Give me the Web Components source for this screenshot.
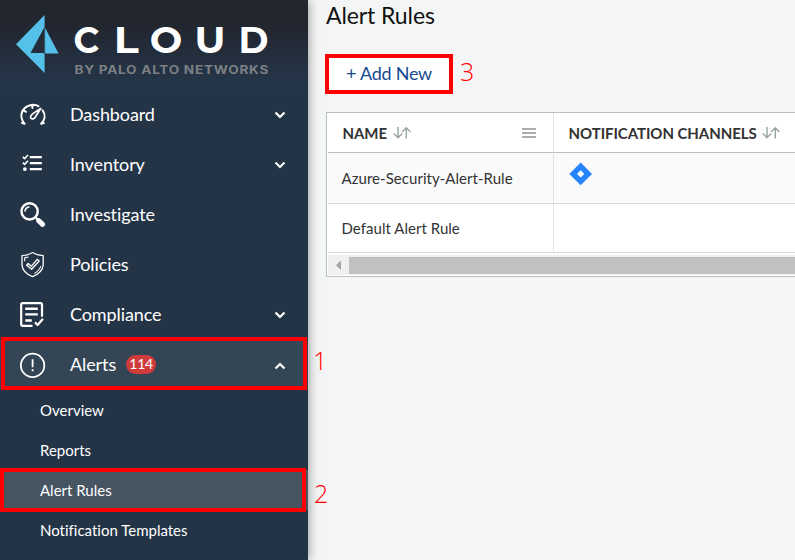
<!DOCTYPE html>
<html lang="en">
<head>
<meta charset="utf-8">
<title>Alert Rules</title>
<style>
html,body{margin:0;height:560px;overflow:hidden}
body{font-family:Lato,"Liberation Sans",sans-serif;font-variant-ligatures:none;background:#f4f6f5}
</style>
</head>
<body>
<cloud-app></cloud-app>
<script>
const define = (name, html) => customElements.define(name, class extends HTMLElement {
  constructor() {
    super();
    const t = document.createElement('template');
    t.innerHTML = html;
    this.attachShadow({ mode: 'open' }).append(t.content.cloneNode(true));
  }
});

define('red-mark', `<style>
:host{position:absolute;box-sizing:border-box;border:4px solid #f00;z-index:3;pointer-events:none}
span{position:absolute;left:calc(100% + var(--gap,10px));top:var(--drop,0px);font:300 25px/30px "Open Sans","Noto Sans",sans-serif;letter-spacing:0;color:#f00}
</style><span><slot></slot></span>`);

define('brand-logo', `<style>:host{display:block;height:90px;background:linear-gradient(#22262f 0,#22262f 25px,#243548 80px)}svg{display:block}</style>
<svg width="308" height="90" viewBox="0 0 308 90">
<path fill="#55c0e8" fill-rule="evenodd" d="M44.6 15 16 44.3 44.6 73V53.6H58.6L44.6 27ZM44 28V53H30.5Z"/>
<path stroke="#232b37" stroke-width=".8" d="M44.6 27V54"/>
<g font-family="Montserrat,Inter,sans-serif" fill="#fff" font-weight="700" font-size="35.5">
<text x="73.5" y="53.3">C</text><text x="113.7" y="53.3" textLength="25" lengthAdjust="spacingAndGlyphs">L</text><text x="149.7" y="53.3" textLength="32.5" lengthAdjust="spacingAndGlyphs">O</text><text x="194.5" y="53.3" textLength="31" lengthAdjust="spacingAndGlyphs">U</text><text x="238.5" y="53.3" textLength="30" lengthAdjust="spacingAndGlyphs">D</text></g>
<g font-family="Inter,sans-serif" font-weight="700" font-size="11.3" fill="#7d7f83" transform="translate(74.5 73.5) scale(1.2 1)">
<text textLength="161.5">BY PALO ALTO NETWORKS</text></g>
</svg>`);

const icons = {
  gauge: '<g fill="none" stroke="#fff" stroke-width="2" stroke-linecap="round" stroke-linejoin="round"><path d="M1.9 20.9 4.6 21.7M4.6 21.7C-1.6 14.5 1.6 5.5 10.2 3.2 13.3 2.4 16.3 2.9 18.4 4.2M22.6 8.4C26 12.8 24.9 18 21.1 21.7L23.8 21.1M12.4 3.2V6M4 8.6 6 9.8"/><path stroke-width="1.7" d="M20.7 6.5 13.3 11.4C10.8 13.2 9.6 15.6 11.3 16.6 13.1 17.6 14.9 16 15.8 14.3Z"/></g>',
  list: '<path fill="none" stroke="#fff" stroke-width="2.2" d="M9.8 5.2H21.8M9.8 11.2H21.8M9.8 17.2H21.8"/><path fill="none" stroke="#fff" stroke-width="1.6" d="M2.8 4.9 4.6 6.6 8 3M2.8 10.7 4.6 12.4 8 8.8"/><circle cx="4.9" cy="17.1" r="1.9" fill="#fff"/>',
  search: '<circle cx="9.6" cy="9.4" r="8.1" fill="none" stroke="#fff" stroke-width="2.4"/><path fill="none" stroke="#fff" stroke-width="1.6" stroke-linecap="round" d="M5 9Q5.4 5.6 8.8 5"/><path stroke="#fff" stroke-width="2" d="M15.2 15 18 17.8"/><path stroke="#fff" stroke-width="5" stroke-linecap="round" d="M18.6 18.6 22.6 22.4"/>',
  shield: '<path fill="none" stroke="#fff" stroke-width="1.3" stroke-linejoin="round" d="M12.5.5C9.5 2.6 6.3 3.3 2 3.6V13C2.3 18.8 7.5 22.6 12.5 24.7 17.5 22.6 22.8 18.8 23.2 13V3.6C19 3.3 15.5 2.6 12.5.5Z"/><path fill="none" stroke="#fff" stroke-width="1.1" d="M4.7 9.2V5.8L8.5 5M20.7 14C20 17.5 17 20 14.5 21.5"/><path fill="none" stroke="#fff" stroke-width="1.3" stroke-linejoin="round" d="M6.6 13.2 8.2 11.5 11.3 14.3 17.2 7.3 19.2 9 11.6 17.3Z"/>',
  doc: '<g fill="none" stroke="#fff" stroke-width="2.2" stroke-linejoin="round"><path d="M22 14.8V2.5Q22 1.1 20.5 1.1H2.8Q1.2 1.1 1.2 2.5V22.3Q1.2 23.8 2.8 23.8H12.5"/><path stroke-width="2.4" d="M5.2 6.7H17.8M5.2 12.4H17.8M5.2 18.5H11.8"/><path d="M15 20.3 17.6 23 23 16.7"/></g>',
  alert: '<g fill="none" stroke="#fff"><circle cx="12.6" cy="13.4" r="11.7" stroke-width="1.8"/><path stroke-width="1.8" d="M12.6 7.2V15.2M12.6 17.3V19.3"/></g>'
};
customElements.define('nav-item', class extends HTMLElement {
  constructor() {
    super();
    const arrow = this.getAttribute('arrow');
    this.attachShadow({ mode: 'open' }).innerHTML = `<style>
:host{display:flex;align-items:center;position:relative;box-sizing:border-box;height:50px;padding:0 22px 0 20px;color:#fff;font-size:18px;line-height:24px}
:host([active]){background:#344556}
.icon{width:26px;height:26px;flex:none;display:block;overflow:visible}
.text{margin:-2px 0 0 24px;letter-spacing:-.1px;white-space:nowrap;flex:1;display:flex;align-items:center}
.chev{width:12px;height:8px;margin-top:-1px}
.chev.up{margin-top:1px}
</style><svg class="icon" viewBox="0 0 26 26">${icons[this.getAttribute('icon')]}</svg>
<span class="text"><slot></slot></span>
${arrow ? `<svg class="chev ${arrow}" viewBox="0 0 12 8"><path d="${arrow === 'up' ? 'M1.5 6.5 6 2 10.5 6.5' : 'M1.5 1.5 6 6 10.5 1.5'}" fill="none" stroke="#fff" stroke-width="2.2"/></svg>` : ''}<slot name="mark"></slot>`;
  }
});

define('count-badge', `<style>:host{display:inline-block;box-sizing:border-box;width:30px;height:19px;border-radius:10px;background:#d03c3c;font-size:14px;letter-spacing:-.2px;line-height:17px;text-align:center;margin:0 0 0 10px}</style><slot></slot>`);
define('sub-item', `<style>:host{display:flex;position:relative;align-items:center;height:40px;padding-left:40px;font-size:15px;color:#fff;white-space:nowrap}:host([active]){background:#475563}</style><slot></slot>`);

define('side-nav', `<style>
:host{display:block;width:308px;height:560px;flex:none;background:#243447;position:relative;z-index:2;box-shadow:0 0 11px rgba(0,0,0,.42)}
</style>
<brand-logo></brand-logo>
<nav-item icon="gauge" arrow="down">Dashboard</nav-item>
<nav-item icon="list" arrow="down">Inventory</nav-item>
<nav-item icon="search">Investigate</nav-item>
<nav-item icon="shield">Policies</nav-item>
<nav-item icon="doc" arrow="down">Compliance</nav-item>
<nav-item icon="alert" arrow="up" active>Alerts<count-badge>114</count-badge><red-mark slot="mark" style="left:1px;top:-3px;width:306px;height:53px;--drop:4px">1</red-mark></nav-item>
<sub-item>Overview</sub-item>
<sub-item>Reports</sub-item>
<sub-item active>Alert Rules<red-mark style="left:0;top:-2px;width:306px;height:44px;--drop:6px;--gap:12px">2</red-mark></sub-item>
<sub-item>Notification Templates</sub-item>`);

define('sort-icon', `<style>:host{display:inline-block;width:18px;height:12px}svg{display:block}</style>
<svg width="18" height="12" viewBox="0 0 18 12" fill="none" stroke="#95a5a0" stroke-width="1.4"><path d="M5 0V10.5M.8 6.6 5 10.7 9.2 6.6M13.3 11.5V1M9.1 4.9 13.3.8 17.5 4.9"/></svg>`);
define('head-cell', `<style>:host{display:flex;align-items:center;box-sizing:border-box;height:40px;padding:1px 17px 0 15px;font-size:15px;letter-spacing:-.06px;font-weight:700;color:#333;border-bottom:1px solid #b8bfc6;white-space:nowrap}
span{margin:-1px 0 0 -.5px}sort-icon{margin-left:5.5px}</style><span><slot></slot></span><sort-icon></sort-icon><slot name="menu"></slot>`);
define('body-cell', `<style>:host{display:flex;align-items:center;box-sizing:border-box;padding-left:13.5px;font-size:15px;letter-spacing:.04px;color:#333;border-bottom:1px solid #d5d8da;white-space:nowrap}</style><slot></slot>`);
define('menu-icon', `<style>:host{display:block;margin-left:auto;width:14px;height:10px}svg{display:block}</style><svg width="14" height="10" viewBox="0 0 14 10"><path d="M0 1H14M0 5H14M0 9H14" stroke="#909496" stroke-width="1.3"/></svg>`);
define('channel-icon', `<style>:host{display:block;width:24px;height:24px;margin:-9px 0 0 1.5px}svg{display:block}</style><svg width="24" height="24" viewBox="0 0 24 24"><path fill="#2684ff" fill-rule="evenodd" d="M11.7.4 23 11.9 11.7 23.2.3 11.9ZM11.7 8.2 8 11.9 11.7 15.6 15.4 11.9Z"/></svg>`);
define('scroll-bar', `<style>:host{display:flex;align-items:center;height:20px;margin-top:2px;background:#f0f0f0}svg{width:21px;height:20px;flex:none}div{height:17px;background:#c1c1c1;flex:1}</style><svg viewBox="0 0 21 20"><path fill="#a3a3a3" d="M13 5.5V15L8 10.3Z"/></svg><div></div>`);
define('rules-table', `<style>
:host{display:block;box-sizing:border-box;margin-top:18px;width:469px;height:165px;border:1px solid #b8bfc6;border-right:0;background:#fff;padding-left:1px}
.grid{display:grid;grid-template-columns:226px 1fr;grid-template-rows:40px 51px 49px}
.left{border-right:1px solid #e0e3e5}.odd{background:#fafafa}
</style><div class="grid">
<head-cell class="left">NAME<menu-icon slot="menu"></menu-icon></head-cell><head-cell>NOTIFICATION CHANNELS</head-cell>
<body-cell class="left odd">Azure-Security-Alert-Rule</body-cell><body-cell class="odd"><channel-icon></channel-icon></body-cell>
<body-cell class="left">Default Alert Rule</body-cell><body-cell></body-cell>
</div><scroll-bar></scroll-bar>`);
define('add-button', `<style>:host{display:flex;position:relative;box-sizing:border-box;align-items:center;justify-content:center;width:128px;height:40px;padding-bottom:2px;margin:24px 0 0 -1px;background:#fff;color:#154a92;font-size:18px;letter-spacing:-.25px;white-space:nowrap}</style><slot></slot>`);
define('main-panel', `<style>:host{display:block;flex:1;min-width:0;padding-left:18px}h1{font-weight:400;font-size:23px;line-height:30px;letter-spacing:-.1px;margin:0;color:#111}</style>
<h1>Alert Rules</h1>
<add-button>+ Add New<red-mark style="inset:0;--drop:-2px;--gap:11px">3</red-mark></add-button>
<rules-table></rules-table>`);
define('cloud-app', `<style>:host{display:flex;width:795px;height:560px;overflow:hidden;background:#f4f6f5}</style><side-nav></side-nav><main-panel></main-panel>`);
</script>
</body>
</html>
